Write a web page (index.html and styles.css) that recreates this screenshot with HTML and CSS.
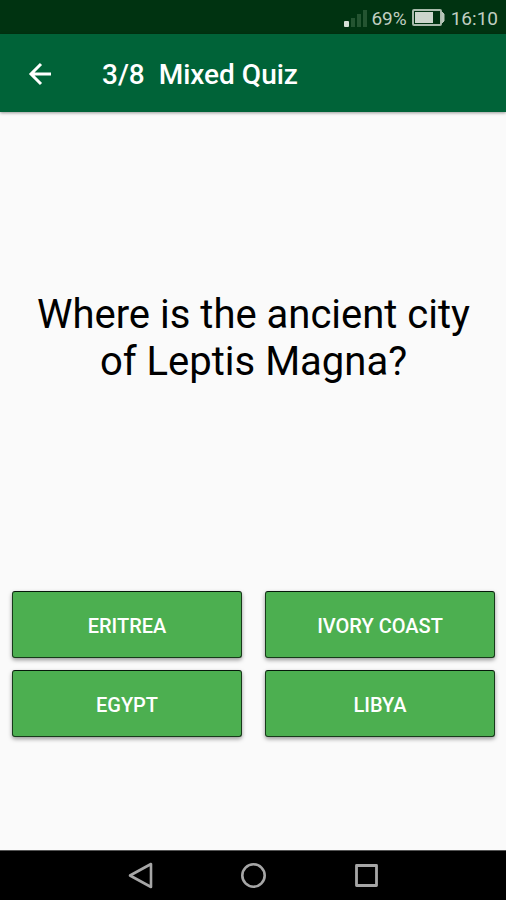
FILE: index.html
```html
<!DOCTYPE html>
<html lang="en">
<head>
  <meta charset="UTF-8">
  <meta name="viewport" content="width=device-width, initial-scale=1.0">
  <title>Mixed Quiz</title>
  <link rel="stylesheet" href="styles.css">
</head>
<body>
  <div class="status-bar">
    <svg class="signal" width="23" height="18" viewBox="0 0 23 18" aria-hidden="true">
      <rect x="0" y="12" width="5" height="6" rx="1" fill="#d5e0d6"/>
      <rect x="7" y="9" width="4" height="9" fill="#245431"/>
      <rect x="13" y="5" width="4" height="13" fill="#245431"/>
      <rect x="19" y="1" width="4" height="17" fill="#245431"/>
    </svg>
    <span class="percent">69%</span>
    <svg class="battery" width="33" height="18" viewBox="0 0 33 18" aria-hidden="true">
      <rect x="1" y="1" width="28" height="15" rx="1" fill="none" stroke="#a9bbac" stroke-width="2"/>
      <rect x="3" y="3" width="18" height="11" fill="#ccd6cc"/>
      <path d="M30 3l2 2v7l-2 2z" fill="#b7c7b9" stroke="#b7c7b9"/>
    </svg>
    <span class="clock">16:10</span>
  </div>

  <header class="app-bar">
    <button class="back" type="button" aria-label="Back">
      <svg width="24" height="24" viewBox="0 0 24 24" fill="none" stroke="#fff" stroke-width="3">
        <path d="M23 12H3M13 2L3 12l10 10"/>
      </svg>
    </button>
    <h1 class="title">3/8&nbsp; Mixed Quiz</h1>
  </header>

  <main class="quiz">
    <div class="question">
      <p>Where is the ancient city of Leptis Magna?</p>
    </div>
    <div class="answers">
      <button class="answer" type="button">ERITREA</button>
      <button class="answer" type="button">IVORY COAST</button>
      <button class="answer" type="button">EGYPT</button>
      <button class="answer" type="button">LIBYA</button>
    </div>
  </main>

  <nav class="nav-bar">
    <button class="nav-button" type="button" aria-label="Back">
      <svg width="28" height="28" viewBox="0 0 28 28" fill="none" stroke="#a6a6a6" stroke-width="2.6" stroke-linejoin="round">
        <path d="M25 2v23L4 13.5z"/>
      </svg>
    </button>
    <button class="nav-button" type="button" aria-label="Home">
      <svg width="28" height="28" viewBox="0 0 28 28" fill="none" stroke="#a6a6a6" stroke-width="2.6">
        <circle cx="14.5" cy="13.5" r="11.2"/>
      </svg>
    </button>
    <button class="nav-button" type="button" aria-label="Recent apps">
      <svg width="28" height="28" viewBox="0 0 28 28" fill="none" stroke="#a6a6a6" stroke-width="2.8" stroke-linejoin="round">
        <rect x="4.5" y="3.5" width="20" height="20"/>
      </svg>
    </button>
  </nav>
</body>
</html>
```

FILE: styles.css
```css
* {
  box-sizing: border-box;
}

body {
  margin: 0;
  min-height: 100vh;
  display: flex;
  flex-direction: column;
  background-color: #fafafa;
  color: #000;
  font-family: Roboto, sans-serif;
}

button {
  margin: 0;
  padding: 0;
  border: none;
  background: none;
  font-family: inherit;
  cursor: pointer;
}

svg {
  display: block;
}

.status-bar {
  display: flex;
  align-items: center;
  justify-content: flex-end;
  gap: 4px;
  height: 34px;
  padding: 2px 8px 0 8px;
  background-color: #003311;
  color: #c0cec1;
  font-size: 19px;
}

.battery {
  margin: 0 2px 0 1px;
}

.app-bar {
  display: flex;
  align-items: center;
  gap: 50px;
  height: 78px;
  padding: 2px 28px 0;
  background-color: #006338;
  color: #fff;
  box-shadow: 0 1px 3px rgba(0, 0, 0, 0.4);
}

.title {
  margin: 0;
  font-size: 28px;
  font-weight: 500;
}

.quiz {
  flex: 1;
  display: flex;
  flex-direction: column;
  padding: 0 11px 113px 12px;
}

.question {
  flex: 1;
  display: flex;
  align-items: center;
  justify-content: center;
  padding: 0 16px 28px;
}

.question p {
  margin: 0;
  font-size: 40px;
  line-height: 47px;
  text-align: center;
}

.answers {
  display: grid;
  grid-template-columns: 1fr 1fr;
  gap: 12px 23px;
}

.answer {
  height: 67px;
  padding-top: 2px;
  border: 1px solid #173a1a;
  border-top-color: #06180a;
  border-radius: 3px;
  background-color: #4caf50;
  color: #fff;
  font-size: 20px;
  font-weight: 500;
  box-shadow: 0 2px 4px rgba(0, 0, 0, 0.4);
}

.nav-bar {
  display: flex;
  align-items: center;
  justify-content: center;
  gap: 85px;
  height: 50px;
  border-top: 1px solid #555;
  background-color: #000;
}
```
